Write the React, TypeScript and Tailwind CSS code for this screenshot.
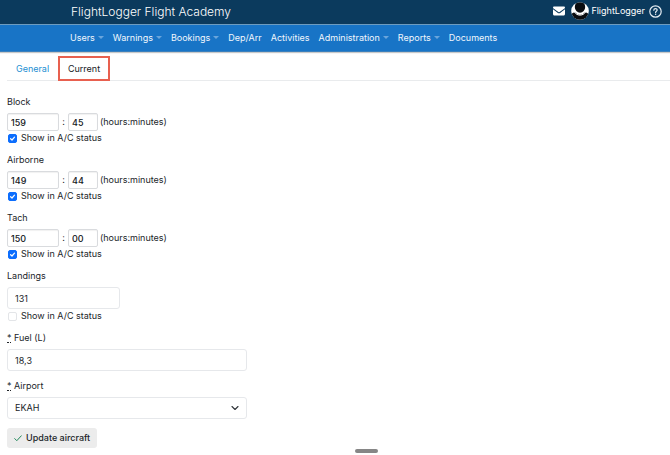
import { useState } from "react";

const navItems = [
  { label: "Users", menu: true },
  { label: "Warnings", menu: true },
  { label: "Bookings", menu: true },
  { label: "Dep/Arr", menu: false },
  { label: "Activities", menu: false },
  { label: "Administration", menu: true },
  { label: "Reports", menu: true },
  { label: "Documents", menu: false },
];

function EnvelopeIcon() {
  return (
    <svg viewBox="0 0 12 10" className="h-[10px] w-3" aria-hidden="true">
      <path fill="#fff" d="M1.2 0.5h9.6C11.5 0.5 12 1 12 1.6c0 .4-.2.7-.5.9L6.6 6.1a1 1 0 0 1-1.2 0L.5 2.5A1.1 1.1 0 0 1 0 1.600C0 1 .5.5 1.200.5Z" />
      <path fill="#fff" d="M0 3.300l4.900 3.600a1.900 1.900 0 0 0 2.200 0L12 3.300v4.700C12 8.900 11.400 9.500 10.500 9.500h-9C.6 9.500 0 8.900 0 8Z" />
    </svg>
  );
}

function Avatar() {
  return (
    <svg viewBox="0 0 18 18" className="size-[18px]" aria-hidden="true">
      <defs>
        <clipPath id="avatar-circle">
          <circle cx="9" cy="9" r="8.800" />
        </clipPath>
      </defs>
      <g clipPath="url(#avatar-circle)">
        <rect width="18" height="18" fill="#fff" />
        <path fill="#0b0d10" d="M0 18v-5.500c.8-1.200 2.500-1.800 4.200-2.200 1 1.600 2.800 2.500 4.800 2.500s3.800-.9 4.800-2.500c1.700.4 3.400 1 4.200 2.200V18Z" />
        <ellipse cx="9" cy="5" rx="5.200" ry="5.800" fill="#0b0d10" />
        <path d="M3.300 9.500c1 2.400 3.200 3.600 5.700 3.600s4.700-1.200 5.700-3.600" fill="none" stroke="#fff" strokeWidth="1" />
      </g>
    </svg>
  );
}

function HelpIcon() {
  return (
    <svg viewBox="0 0 13 13" className="size-[13px]" fill="none" stroke="#e6edf3" aria-hidden="true">
      <circle cx="6.500" cy="6.500" r="5.700" strokeWidth="1.200" />
      <path d="M4.800 5.200c0-1 .7-1.600 1.700-1.600s1.700.6 1.700 1.500c0 1.200-1.600 1.200-1.600 2.400" strokeWidth="1.200" strokeLinecap="round" />
      <circle cx="6.600" cy="9.300" r="0.750" fill="#e6edf3" stroke="none" />
    </svg>
  );
}

function StatusCheck({ id, initial }: { id: string; initial: boolean }) {
  const [checked, setChecked] = useState(initial);
  return (
    <div className="flex h-[14px] items-center gap-1">
      <span className="grid size-[10px] shrink-0 place-items-center">
        <input
          id={id}
          type="checkbox"
          checked={checked}
          onChange={(e) => setChecked(e.target.checked)}
          className="col-start-1 row-start-1 size-[9px] appearance-none rounded-[2px] border border-[#e3e5e8] bg-white checked:border-[#0d6efd] checked:bg-[#0d6efd]"
        />
        {checked && (
          <svg viewBox="0 0 9 9" className="pointer-events-none col-start-1 row-start-1 size-[9px]" fill="none" stroke="#fff" strokeWidth="1.200" strokeLinecap="round" strokeLinejoin="round" aria-hidden="true">
            <path d="M2.600 4.700 4 6l2.500-2.800" />
          </svg>
        )}
      </span>
      <label htmlFor={id}>Show in A/C status</label>
    </div>
  );
}

const timeInput =
  "h-[18px] rounded-[2px] border border-[#d9dbde] bg-white px-[3px] font-medium text-[#16191d] shadow-[inset_0_1px_1px_#f1f1f1]";

const fieldInput =
  "mt-1 block h-[22px] rounded-[3px] border border-[#e6e8eb] bg-white px-[7px] text-[#212529]";

function TimeField({ label, hours, minutes }: { label: string; hours: string; minutes: string }) {
  const id = label.toLowerCase();
  return (
    <div>
      <label htmlFor={`${id}-hours`} className="block">{label}</label>
      <div className="mt-1 flex items-center">
        <input id={`${id}-hours`} defaultValue={hours} className={`${timeInput} w-[52px]`} />
        <span className="w-[9px] text-center">:</span>
        <input aria-label={`${label} minutes`} defaultValue={minutes} className={`${timeInput} w-[30px]`} />
        <span className="ml-0.5">(hours:minutes)</span>
      </div>
      <StatusCheck id={`${id}-status`} initial />
    </div>
  );
}

function Required() {
  return (
    <abbr title="required" className="mr-[3px] inline-block w-1 border-b border-dotted border-[#212529] text-center leading-[9px] no-underline">
      *
    </abbr>
  );
}

export default function App() {
  return (
    <div className="min-h-screen bg-white font-['Inter','Liberation_Sans',sans-serif] text-[9px] leading-[14px] text-[#212529]">
      <header>
        <div className="flex h-6 items-center justify-between bg-[#0b3a5d] pr-2 pl-[71px] text-white">
          <h1 className="text-[12px] font-light">FlightLogger Flight Academy</h1>
          <div className="flex items-center pb-0.5">
            <button type="button" aria-label="Messages"><EnvelopeIcon /></button>
            <button type="button" className="ml-[6px] flex items-center gap-0.5">
              <Avatar />
              FlightLogger
            </button>
            <button type="button" aria-label="Help" className="ml-1"><HelpIcon /></button>
          </div>
        </div>
        <nav className="flex h-7 items-center gap-[9px] border-y border-t-[#6d9cc0] border-b-[#3b80bd] bg-[#1874c6] pb-px pl-[70px] text-[#f1f7fd] shadow-[0_1px_1px_#c9c9c9]">
          {navItems.map((item) => (
            <a key={item.label} href="#" className="flex items-center gap-[3px]">
              {item.label}
              {item.menu && (
                <span className="h-0 w-0 border-x-[3px] border-t-[3px] border-x-transparent border-t-[#6aa5dc]" />
              )}
            </a>
          ))}
        </nav>
      </header>

      <main className="pl-[7px]">
        <div className="mt-1 flex h-[25px] border-b border-[#e9ebed]">
          <a href="#" className="flex w-[51px] items-center justify-center pt-0.5 text-[#1d8fd2]">General</a>
          <a href="#" className="-mb-px flex w-[52px] items-center justify-center border-2 border-[#e8604f] pt-px text-[#16191d]">Current</a>
        </div>

        <form className="mt-[14px] flex flex-col items-start gap-2" onSubmit={(e) => e.preventDefault()}>
          <TimeField label="Block" hours="159" minutes="45" />
          <TimeField label="Airborne" hours="149" minutes="44" />
          <TimeField label="Tach" hours="150" minutes="00" />
          <div>
            <label htmlFor="landings" className="block">Landings</label>
            <input id="landings" defaultValue="131" className={`${fieldInput} w-[113px]`} />
            <StatusCheck id="landings-status" initial={false} />
          </div>
          <div>
            <label htmlFor="fuel" className="block h-[14px]"><Required />Fuel (L)</label>
            <input id="fuel" defaultValue="18,3" className={`${fieldInput} w-60`} />
          </div>
          <div>
            <label htmlFor="airport" className="block h-[14px]"><Required />Airport</label>
            <div className="grid items-center">
              <select id="airport" className={`${fieldInput} col-start-1 row-start-1 w-60 appearance-none`}>
                <option>EKAH</option>
              </select>
              <svg viewBox="0 0 8 8" className="pointer-events-none col-start-1 row-start-1 mt-1 mr-2 size-2 justify-self-end" fill="none" stroke="#30353a" strokeWidth="1.100" strokeLinecap="round" strokeLinejoin="round" aria-hidden="true">
                <path d="M1 2.500 4 5.500l3-3" />
              </svg>
            </div>
          </div>
          <button type="submit" className="mt-px flex h-5 items-center gap-1 rounded-[3px] bg-[#ececec] px-[7px] font-medium text-[#212529]">
            <svg viewBox="0 0 8 8" className="size-2" fill="none" stroke="#22895a" strokeWidth="1" strokeLinecap="round" strokeLinejoin="round" aria-hidden="true">
              <path d="M0.700 4.600 2.800 6.700 7.300 1.800" />
            </svg>
            Update aircraft
          </button>
        </form>
      </main>
      <div className="fixed bottom-0.5 left-[355px] h-1 w-[23px] rounded-full bg-[#868686]" />
    </div>
  );
}
